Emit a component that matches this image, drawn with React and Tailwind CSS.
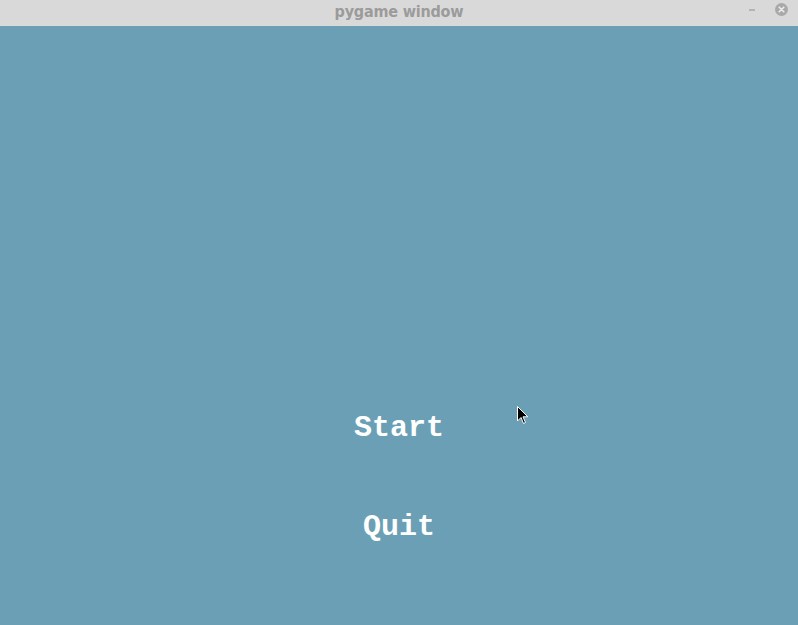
import React from 'react';

export default function App() {
    return (
        <div className="w-[798px] h-[625px] flex flex-col bg-[#6a9fb5] overflow-hidden">
            {/* Title bar */}
            <div className="h-[26px] bg-[#d9d9d9] relative flex items-center justify-center shrink-0">
                <span
                    className="text-[16px] font-bold text-[#9b9b9b] leading-none tracking-[-0.2px] mt-[-2px]"
                    style={{ fontFamily: '"DejaVu Sans Condensed", "Noto Sans", sans-serif' }}
                >
                    pygame window
                </span>
                <div className="absolute left-[749px] top-[9px] w-[6px] h-[2px] bg-[#b3b3b3]"></div>
                <div className="absolute left-[775px] top-[3px] w-[13px] h-[13px] rounded-full bg-[#a9a9a9] flex items-center justify-center">
                    <svg width="7" height="7" viewBox="0 0 7 7">
                        <path d="M1.2 1.2 L5.8 5.8 M5.8 1.2 L1.2 5.8" stroke="#ececec" strokeWidth="1.6" strokeLinecap="round" />
                    </svg>
                </div>
            </div>

            {/* Game surface */}
            <div className="flex-1 relative flex flex-col items-center">
                <div
                    className="mt-[387px] text-white font-bold text-[30px] leading-none"
                    style={{ fontFamily: '"Liberation Mono", "Courier New", monospace' }}
                >
                    Start
                </div>
                <div
                    className="mt-[69px] text-white font-bold text-[30px] leading-none"
                    style={{ fontFamily: '"Liberation Mono", "Courier New", monospace' }}
                >
                    Quit
                </div>

                {/* Mouse pointer */}
                <svg className="absolute left-[517px] top-[380px]" width="12" height="19" viewBox="0 0 12 19">
                    <path d="M0.5 0.5 L0.5 15 L4 11.5 L6.5 17.5 L8.5 16.5 L6 10.8 L10.8 10.8 Z" fill="#000" stroke="#fff" strokeWidth="1" />
                </svg>
            </div>
        </div>
    );
}
